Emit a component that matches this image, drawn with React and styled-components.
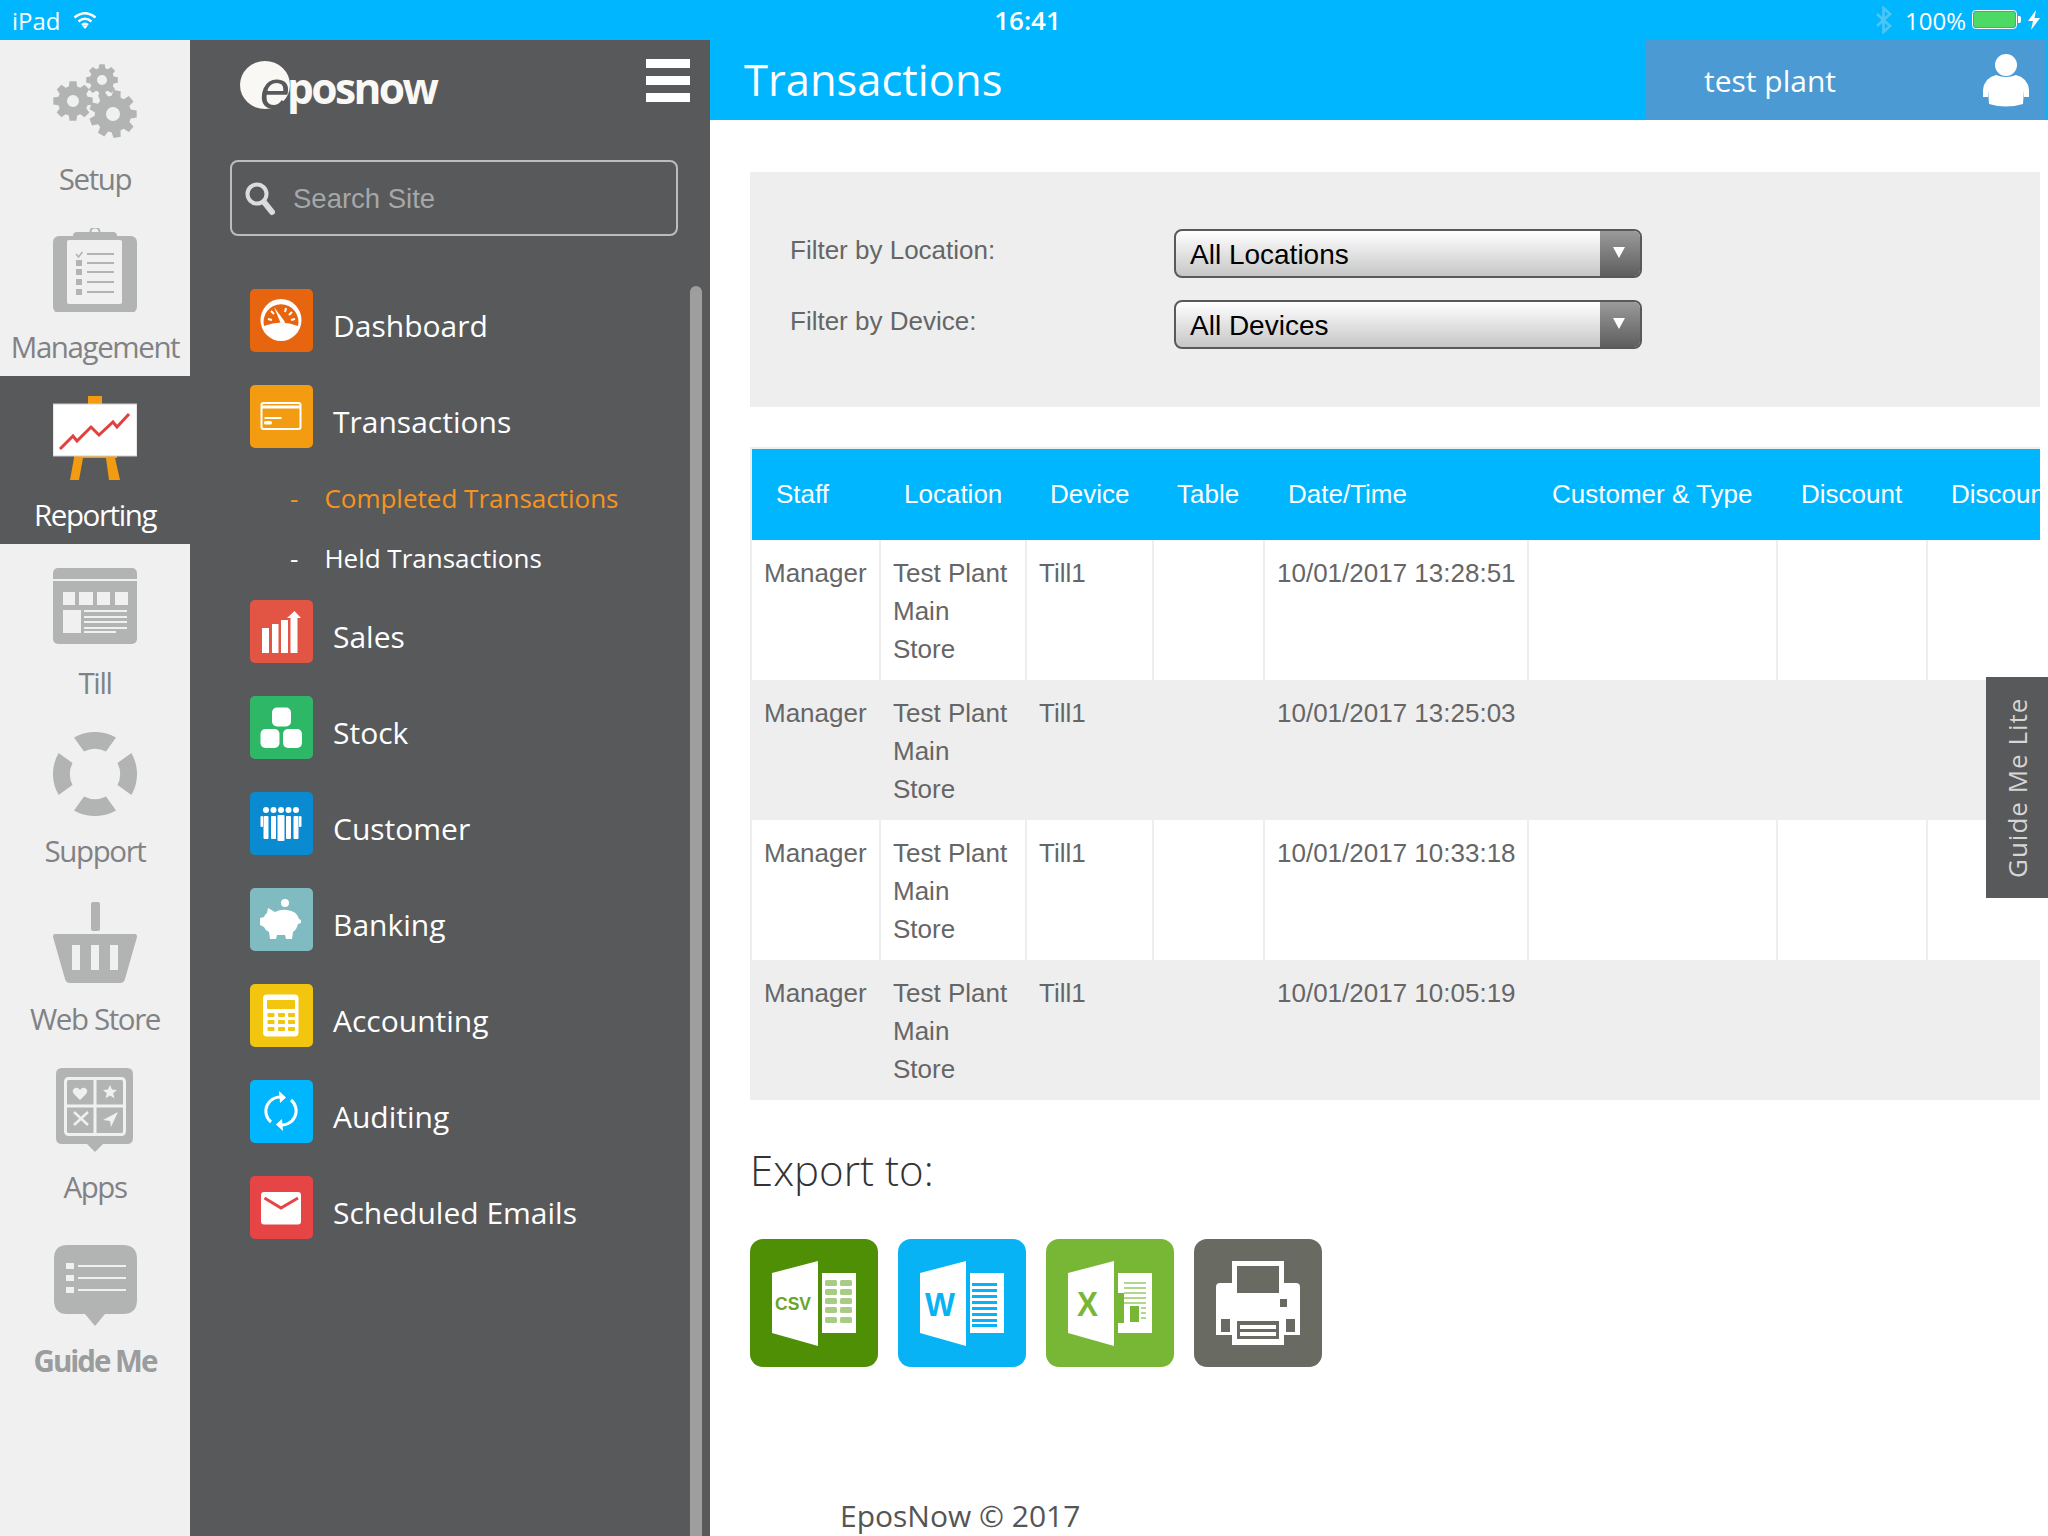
import React from 'react';
import styled, { createGlobalStyle } from 'styled-components';

const GlobalStyle = createGlobalStyle`
  html, body { margin: 0; padding: 0; background: #fff; }
  body { font-family: 'Open Sans', sans-serif; }
`;

const Page = styled.div`
  position: relative;
  width: 2048px;
  height: 1536px;
  overflow: hidden;
  display: flex;
  flex-direction: column;
`;

// ios status bar
const StatusBar = styled.div`
  height: 40px;
  flex: none;
  background: #00b6ff;
  color: #fff;
  font-size: 24px;
  display: grid;
  grid-template-columns: 1fr auto 1fr;
  align-items: center;
  padding: 0 8px 0 12px;
`;

const StatusSide = styled.div`
  display: flex;
  align-items: center;
  gap: ${p => p.$gap || 0}px;
  justify-content: ${p => (p.$right ? 'flex-end' : 'flex-start')};
`;

const BatteryText = styled.span`
  margin-left: 6px;
`;

const Clock = styled.div`
  font-weight: 600;
  font-size: 26px;
  margin-left: 3px;
`;

const Body = styled.div`
  flex: 1;
  display: flex;
  min-height: 0;
`;

// left icon rail
const Rail = styled.nav`
  width: 190px;
  flex: none;
  background: #f0f0f0;
`;

const RailItem = styled.div`
  height: 168px;
  box-sizing: border-box;
  padding-top: 20px;
  display: flex;
  flex-direction: column;
  align-items: center;
  background: ${p => (p.$active ? '#58595b' : 'transparent')};
  color: ${p => (p.$active ? '#fff' : '#808285')};
`;

const RailIcon = styled.svg`
  width: 84px;
  height: ${p => p.$tall ? 92 : 84}px;
  flex: none;
  display: block;
  fill: #b2b4b4;
`;

const RailLabel = styled.div`
  font-size: 29.5px;
  font-weight: ${p => (p.$bold ? 700 : 400)};
  letter-spacing: ${p => (p.$bold ? -2 : -1.4)}px;
  line-height: 40px;
  margin-top: ${p => (p.$bold ? 13 : 15)}px;
  white-space: nowrap;
  color: ${p => (p.$bold ? '#9a9c9d' : 'inherit')};
`;

// dark menu column
const Sidebar = styled.aside`
  position: relative;
  width: 520px;
  flex: none;
  background: #58595b;
  color: #fff;
  box-sizing: border-box;
  padding-top: 20px;
`;

const LogoRow = styled.div`
  height: 52px;
  display: flex;
  align-items: center;
  justify-content: space-between;
  padding: 0 20px 0 50px;
`;

const Logo = styled.div`
  display: flex;
  align-items: center;
  color: #faf8f4;
`;

const LogoMark = styled.div`
  width: 50px;
  height: 48px;
  box-sizing: border-box;
  border-radius: 50%;
  background: #faf8f4;
  color: #58595b;
  display: flex;
  justify-content: flex-end;
  font: italic 400 54px/48px 'Liberation Sans', sans-serif;
  padding-top: 4px;
  margin-top: -2px;
`;

const LogoWord = styled.div`
  font-size: 42.5px;
  font-weight: 700;
  letter-spacing: -2.6px;
  line-height: 48px;
  margin: 3px 0 0 -3px;
`;

const Burger = styled.div`
  width: 44px;
  display: flex;
  flex-direction: column;
  gap: 8px;
  margin-bottom: 11px;
`;

const BurgerBar = styled.div`
  height: 9px;
  background: #fff;
`;

const SearchBox = styled.div`
  margin: 48px 32px 0 40px;
  height: 76px;
  box-sizing: border-box;
  border: 2px solid #bcbdbe;
  border-radius: 8px;
  display: flex;
  align-items: center;
  padding: 2px 0 0 13px;
  gap: 18px;
  font: 27.5px 'Liberation Sans', sans-serif;
  color: #a6a7a8;
`;

const NavList = styled.div`
  margin-top: 53px;
  padding-left: 60px;
  display: flex;
  flex-direction: column;
  gap: 33px;
`;

const NavRow = styled.div`
  display: flex;
  align-items: center;
  gap: 20px;
  height: 63px;
`;

const NavIcon = styled.div`
  width: 63px;
  height: 63px;
  border-radius: 5px;
  background: ${p => p.$bg};
  flex: none;
  svg { display: block; width: 63px; height: 63px; fill: #fff; }
`;

const NavLabel = styled.div`
  font-size: 30px;
  padding-top: 9px;
`;

const SubList = styled.div`
  margin: -12px 0 -22px;
  padding-left: 40px;
`;

const SubItem = styled.div`
  height: 60px;
  display: flex;
  align-items: center;
  gap: 26px;
  font-size: 26px;
  padding-bottom: 2px;
  box-sizing: border-box;
  color: ${p => (p.$active ? '#f7941d' : '#fff')};
`;

const ScrollThumb = styled.div`
  position: absolute;
  left: 500px;
  top: 246px;
  bottom: 0;
  width: 12px;
  border-radius: 6px 6px 0 0;
  background: #9e9e9e;
`;

// main column
const Main = styled.main`
  flex: 1;
  min-width: 0;
  background: #fff;
`;

const Header = styled.header`
  height: 80px;
  background: #00b6ff;
  color: #fff;
  display: flex;
  justify-content: space-between;
  padding: 0 2px 0 34px;
`;

const Title = styled.h1`
  margin: 0;
  font-size: 43.5px;
  font-weight: 400;
  line-height: 79px;
`;

const UserBlock = styled.div`
  width: 400px;
  background: #4b9ad4;
  display: flex;
  align-items: center;
  justify-content: space-between;
  box-sizing: border-box;
  padding: 0 17px 0 58px;
  font-size: 30px;
`;

const Content = styled.div`
  padding: 52px 8px 0 40px;
`;

const FilterPanel = styled.section`
  height: 235px;
  box-sizing: border-box;
  background: #eee;
  padding: 57px 0 0 40px;
  display: grid;
  grid-template-columns: 384px 468px;
  grid-auto-rows: 49px;
  row-gap: 22px;
  align-items: start;
`;

const FilterLabel = styled.div`
  font: 26px/36px 'Liberation Sans', sans-serif;
  color: #666;
  margin-top: 3px;
`;

const Select = styled.div`
  height: 49px;
  box-sizing: border-box;
  border: 2px solid #58595b;
  border-radius: 8px;
  overflow: hidden;
  display: flex;
  justify-content: space-between;
  background: linear-gradient(#fff, #c6c6c6);
  font: 28px/47px 'Liberation Sans', sans-serif;
  color: #000;
  padding-left: 14px;
`;

const SelectArrow = styled.div`
  width: 40px;
  background: linear-gradient(#9a9a9a, #5e5e5e);
  display: flex;
  align-items: center;
  justify-content: center;
  &::after {
    content: '';
    border-left: 6px solid transparent;
    border-right: 6px solid transparent;
    border-top: 11px solid #fff;
    margin: -3px 2px 0 0;
  }
`;

const TableWrap = styled.div`
  margin-top: 40px;
  overflow: hidden;
`;

const Table = styled.table`
  border-collapse: collapse;
  table-layout: fixed;
  width: 1326px;
  font-family: 'Liberation Sans', sans-serif;
  font-size: 26px;
  color: #666;
  border-top: 2px solid #eee;
  border-left: 2px solid #eee;
`;

const Th = styled.th`
  height: 92px;
  padding: 0 0 0 24px;
  background: #00b6ff;
  color: #fff;
  font-weight: 400;
  text-align: left;
  white-space: nowrap;
  box-sizing: border-box;
`;

const Tr = styled.tr`
  background: ${p => (p.$shaded ? '#eee' : '#fff')};
`;

const Td = styled.td`
  height: 140px;
  box-sizing: border-box;
  padding: 14px 12px 12px;
  vertical-align: top;
  line-height: 38px;
  border-right: 2px solid #eee;
`;

const WhenCell = styled(Td)`
  white-space: nowrap;
`;

const ExportTitle = styled.h2`
  margin: 44px 0 0;
  font-size: 42px;
  font-weight: 300;
  line-height: 52px;
  color: #333;
`;

const ExportRow = styled.div`
  display: flex;
  gap: 20px;
  margin-top: 43px;
`;

const ExportTile = styled.div`
  width: 128px;
  height: 128px;
  border-radius: 13px;
  background: ${p => p.$bg};
  svg { display: block; width: 128px; height: 128px; fill: #fff; }
`;

const Footer = styled.footer`
  margin: 129px 0 0 90px;
  font-size: 30px;
  line-height: 40px;
  color: #555;
`;

const GuideTab = styled.div`
  position: absolute;
  right: 0;
  top: 677px;
  width: 62px;
  height: 221px;
  background: #58595b;
  color: #d5d5d5;
  font-size: 26px;
  letter-spacing: 1px;
  writing-mode: vertical-rl;
  transform: rotate(180deg);
  display: flex;
  align-items: center;
  justify-content: center;
`;

// drawn glyphs
const gearPath = (cx, cy, r, teeth, hole) => {
  const pts = [];
  const step = (Math.PI * 2) / teeth;
  for (let i = 0; i < teeth; i++) {
    const a = i * step;
    [[-0.3, 0.76], [-0.18, 1], [0.18, 1], [0.3, 0.76]].forEach(([o, k]) => {
      const t = a + o * step * 1.2;
      pts.push(`${(cx + Math.cos(t) * r * k).toFixed(1)} ${(cy + Math.sin(t) * r * k).toFixed(1)}`);
    });
  }
  return `M${pts.join('L')}Z M${cx - hole} ${cy}a${hole} ${hole} 0 1 0 ${hole * 2} 0a${hole} ${hole} 0 1 0 ${-hole * 2} 0Z`;
};

const polar = (r, deg) => {
  const a = ((deg - 90) * Math.PI) / 180;
  return `${(42 + Math.cos(a) * r).toFixed(1)} ${(42 + Math.sin(a) * r).toFixed(1)}`;
};

const buoyPart = at =>
  `M${polar(42, at - 30)}A42 42 0 0 1 ${polar(42, at + 30)}L${polar(25, at + 26)}A25 25 0 0 0 ${polar(25, at - 26)}Z`;

const SetupIcon = () => (
  <RailIcon viewBox="0 0 84 84">
    <path fillRule="evenodd" d={gearPath(60, 54, 24, 9, 7)} />
    <path fillRule="evenodd" d={gearPath(20, 41, 20, 8, 6)} />
    <path fillRule="evenodd" d={gearPath(49, 20, 16, 8, 5)} />
  </RailIcon>
);

const ManagementIcon = () => (
  <RailIcon viewBox="0 0 84 84">
    <rect x="0" y="8" width="84" height="77" rx="6" />
    <rect x="20" y="4" width="44" height="11" rx="4" />
    <circle cx="42" cy="4" r="4.5" fill="none" stroke="#b2b4b4" strokeWidth="2" />
    <rect x="14" y="12" width="55" height="64" rx="2" fill="#f0f0f0" />
    {[35, 44, 54, 64].map(y => <rect key={y} x="23" y={y - 3} width="6" height="6" />)}
    <path d="M23 26l2.5 3 4-5" fill="none" stroke="#b2b4b4" strokeWidth="1.6" />
    {[26, 35, 44, 54, 64].map(y => <rect key={y} x="34" y={y - 1} width="27" height="2" />)}
  </RailIcon>
);

const ReportingIcon = () => (
  <RailIcon viewBox="0 0 84 84">
    <rect x="35" y="0" width="14" height="10" fill="#f39c12" />
    <rect x="21" y="58" width="43" height="4" fill="#f39c12" />
    <path d="M21 62h9l-4 22H17zM53 62h9l5 22H56z" fill="#f39c12" />
    <rect x="0" y="8" width="84" height="52" fill="#fff" stroke="#d0d0d0" />
    <path d="M7 53L20 40L24 45L38 31L46 39L60 26L64 31L76 18" fill="none" stroke="#e2403f" strokeWidth="3" />
  </RailIcon>
);

const TillIcon = () => (
  <RailIcon viewBox="0 0 84 84">
    <rect x="0" y="4" width="84" height="76" rx="5" />
    <rect x="0" y="15" width="84" height="2" fill="#f0f0f0" />
    {[[10, 12], [26, 14], [44, 13], [62, 13]].map(([x, w]) => (
      <rect key={x} x={x} y="28" width={w} height="13" fill="#f0f0f0" />
    ))}
    <rect x="10" y="46" width="18" height="23" fill="#f0f0f0" />
    {[46, 52, 57, 63, 67].map((y, i) => (
      <rect key={y} x="31" y={y} width={i === 4 ? 32 : 43} height="2" fill="#f0f0f0" />
    ))}
  </RailIcon>
);

const SupportIcon = () => (
  <RailIcon viewBox="0 0 84 84">
    {[0, 90, 180, 270].map(a => <path key={a} d={buoyPart(a)} />)}
  </RailIcon>
);

const StoreIcon = () => (
  <RailIcon viewBox="0 0 84 84">
    <rect x="38" y="2" width="9" height="29" rx="2" />
    <path fillRule="evenodd" d="M2 34H82Q84 34 84 37L72 79Q71 83 67 83H17Q13 83 12 79L0 37Q0 34 2 34ZM19 45V70H27V45ZM38 45V70H46V45ZM57 45V70H65V45Z" />
  </RailIcon>
);

const AppsIcon = () => (
  <RailIcon viewBox="0 0 84 84">
    <path d="M9 0H74Q80 0 80 6V70Q80 76 74 76H50L42 84L34 76H9Q3 76 3 70V6Q3 0 9 0Z" />
    <rect x="12.5" y="10.5" width="59" height="56" rx="3" fill="none" stroke="#f0f0f0" strokeWidth="3" />
    <rect x="40.5" y="10" width="3" height="56" fill="#f0f0f0" />
    <rect x="12" y="36.500" width="60" height="3" fill="#f0f0f0" />
    <path d="M27 32l-6-6q-3-4 1-6 3-1 5 2 2-3 5-2 4 2 1 6z" fill="#f0f0f0" />
    <path d="M57 17l2 4.500 5 .5-3.800 3.300 1.200 5-4.400-2.700-4.400 2.700 1.200-5L50 22l5-.5z" fill="#f0f0f0" />
    <path d="M21 44l14 13M35 44L21 57" stroke="#f0f0f0" strokeWidth="2.400" />
    <path d="M65 44L50 52l7 1 1 6z" fill="#f0f0f0" />
  </RailIcon>
);

const GuideIcon = () => (
  <RailIcon viewBox="0 0 84 92" $tall>
    <path d="M14 9H70Q84 9 84 23V64Q84 78 70 78H52L42 90L32 78H14Q1 78 1 64V23Q1 9 14 9Z" />
    {[30, 42, 54].map(y => (
      <g key={y}>
        <rect x="13" y={y - 3} width="8" height="6" fill="#f0f0f0" />
        <rect x="25" y={y - 1} width="48" height="2" fill="#f0f0f0" />
      </g>
    ))}
  </RailIcon>
);

const DashboardGlyph = () => (
  <svg viewBox="0 0 63 63">
    <ellipse cx="31" cy="31" rx="20.500" ry="21" />
    <path d="M14 37A17.500 17.500 0 1 1 48 37Q31 30 14 37Z" fill="#e8650f" />
    <path d="M24 18l7 17a3 3 0 0 0 4-2z" fill="#fff" />
    <path d="M18 30l4 1M21 22l3 3M36 19l-1 4M42 23l-3 3M45 30l-4 1" stroke="#fff" strokeWidth="2" />
  </svg>
);

const CardGlyph = () => (
  <svg viewBox="0 0 63 63">
    <rect x="11.500" y="18" width="39" height="26" rx="2" fill="none" stroke="#fff" strokeWidth="2" />
    <rect x="11" y="20.500" width="40" height="3" />
    <rect x="14.500" y="32" width="17" height="2" />
    <rect x="14" y="36" width="8" height="3.500" rx="1.500" />
  </svg>
);

const SalesGlyph = () => (
  <svg viewBox="0 0 63 63">
    <rect x="12" y="28" width="7" height="25" />
    <rect x="22" y="24" width="6.500" height="29" />
    <rect x="31" y="20" width="7" height="33" />
    <path d="M40.500 53V18H37L44.500 11L51 18H47.500V53Z" />
  </svg>
);

const StockGlyph = () => (
  <svg viewBox="0 0 63 63">
    <rect x="22" y="11.500" width="19" height="19" rx="5" />
    <rect x="10.500" y="33" width="19" height="19" rx="5" />
    <rect x="33" y="33" width="19" height="19" rx="5" />
  </svg>
);

const CustomerGlyph = () => (
  <svg viewBox="0 0 63 63">
    {[16, 23.500, 38.500, 46].map(cx => (
      <g key={cx}>
        <circle cx={cx} cy="18" r="3" />
        <rect x={cx - 2.500} y="24" width="5" height="23" rx="1" />
      </g>
    ))}
    <circle cx="31" cy="18" r="3" />
    <rect x="27.500" y="23" width="7" height="26" rx="1" />
    <rect x="10.500" y="24" width="2.500" height="11" rx="1" />
    <rect x="49" y="24" width="2.500" height="11" rx="1" />
  </svg>
);

const PigGlyph = () => (
  <svg viewBox="0 0 63 63">
    <circle cx="35" cy="15" r="4" />
    <path d="M18 20l7 4q6-3 12-2 10 1 12 9l2 1v3l-3 1q-1 5-5 8l-1 7h-6l-1-4h-8l-1 4h-6l-1-7q-4-2-5-5l-4-2v-7l4-1q1-3 3-4z" />
  </svg>
);

const CalcGlyph = () => (
  <svg viewBox="0 0 63 63">
    <rect x="13" y="10.500" width="35.500" height="42" rx="4" />
    <rect x="17" y="16" width="28" height="9" rx="1" fill="#f2c50f" />
    {[29, 36, 43].map(y => [17.500, 28, 38].map(x => (
      <rect key={`${x}-${y}`} x={x} y={y} width="7" height="4" rx="1" fill="#f2c50f" />
    )))}
  </svg>
);

const AuditGlyph = () => (
  <svg viewBox="0 0 63 63">
    <path d="M21 42A14 14 0 0 1 33 17.500" fill="none" stroke="#fff" strokeWidth="3" />
    <path d="M41 20A14 14 0 0 1 29 44.500" fill="none" stroke="#fff" strokeWidth="3" />
    <path d="M29 11l7 6.500-6 5.500zM33 51l-7-6.500 6-5.500z" />
  </svg>
);

const MailGlyph = () => (
  <svg viewBox="0 0 63 63">
    <rect x="11" y="16" width="40" height="32.500" rx="3" />
    <path d="M14.500 22L31 32L48 22" fill="none" stroke="#e74445" strokeWidth="3" />
  </svg>
);

const CsvTile = () => (
  <ExportTile $bg="#4e8f06">
    <svg viewBox="0 0 128 128">
      <path d="M22 34L68 22V107L22 94Z" />
      <rect x="72" y="34" width="34" height="60" />
      <text x="25" y="71" fontFamily="Liberation Sans" fontWeight="700" fontSize="19" fill="#6aa52a" textLength="36" lengthAdjust="spacingAndGlyphs">CSV</text>
      {[41, 50, 59, 68, 78].map(y => [75, 90].map(x => (
        <rect key={`${x}-${y}`} x={x} y={y} width="12" height="6" rx="1.500" fill="#a8cc84" />
      )))}
    </svg>
  </ExportTile>
);

const WordTile = () => (
  <ExportTile $bg="#07b3f5">
    <svg viewBox="0 0 128 128">
      <path d="M22 34L68 22V107L22 94Z" />
      <rect x="72" y="34" width="34" height="60" />
      <text x="27" y="77" fontFamily="Liberation Sans" fontWeight="700" fontSize="34" fill="#07b3f5" textLength="30" lengthAdjust="spacingAndGlyphs">W</text>
      {[44, 50, 56, 62, 68, 74, 80, 85].map(y => (
        <rect key={y} x="74" y={y} width="25" height="3" fill="#07b3f5" />
      ))}
    </svg>
  </ExportTile>
);

const ExcelTile = () => (
  <ExportTile $bg="#78b735">
    <svg viewBox="0 0 128 128">
      <path d="M22 34L68 22V107L22 94Z" />
      <rect x="72" y="34" width="34" height="60" />
      <text x="31" y="77" fontFamily="Liberation Sans" fontWeight="700" fontSize="35" fill="#78b735" textLength="21" lengthAdjust="spacingAndGlyphs">X</text>
      {[43, 48, 53, 58, 63].map(y => <rect key={y} x="78" y={y} width="22" height="2" fill="#b3d68e" />)}
      <path d="M72 54H78V84H72Z" fill="#78b735" />
      <rect x="84" y="67" width="9" height="16" fill="#78b735" />
      {[68, 73, 78].map(y => <rect key={y} x="95" y={y} width="5" height="2" fill="#b3d68e" />)}
    </svg>
  </ExportTile>
);

const PrintTile = () => (
  <ExportTile $bg="#696a62">
    <svg viewBox="0 0 128 128">
      <path fillRule="evenodd" d="M38 22H90V44H102Q106 44 106 48V96H90V106H38V96H22V48Q22 44 26 44H38ZM43 27V54H85V27ZM86 60V68H93V60ZM27 80V93H36V80ZM92 80V93H101V80ZM43 82V100H85V82Z" />
      <rect x="46" y="86" width="36" height="4" />
      <rect x="46" y="93" width="36" height="4" />
    </svg>
  </ExportTile>
);

const Wifi = () => (
  <svg width="24" height="18" viewBox="0 0 24 18" fill="none" stroke="#fff" strokeWidth="2.600">
    <path d="M1.500 6.500Q12-2 22.500 6.500M5.500 10.500Q12 5 18.500 10.500M9 14Q12 11.500 15 14" />
    <path d="M12 18l-2.500-3q2.500-1.500 5 0z" fill="#fff" stroke="none" />
  </svg>
);

const Bluetooth = () => (
  <svg width="18" height="28" viewBox="0 0 18 28" fill="none" stroke="#4dc5f5" strokeWidth="2.600">
    <path d="M2 8L15 20L8.500 26V2L15 8L2 20" />
  </svg>
);

const Battery = () => (
  <svg width="50" height="20" viewBox="0 0 50 20">
    <rect x="0.500" y="0.500" width="44" height="18" rx="3" fill="none" stroke="#fff" />
    <rect x="2" y="2" width="41" height="15" rx="2" fill="#4cd964" />
    <path d="M46 6h1.500q1.500 0 1.500 2v3q0 2-1.500 2H46z" fill="#fff" />
  </svg>
);

const Bolt = () => (
  <svg width="12" height="20" viewBox="0 0 12 20" fill="#fff">
    <path d="M8 0L0 11H5L3 20L12 8H6.500Z" />
  </svg>
);

const UserGlyph = () => (
  <svg width="46" height="53" viewBox="0 0 46 53" fill="#fff">
    <circle cx="23" cy="11" r="11" />
    <path d="M13 21q10 4 20 0 12 3 13 15v7h-5v-7l-1 14q-17 5-34 0L5 36v7H0v-7Q1 24 13 21z" />
  </svg>
);

const SearchGlyph = () => (
  <svg width="30" height="34" viewBox="0 0 30 34" fill="none" stroke="#dcdcdc">
    <circle cx="12" cy="12" r="9.500" strokeWidth="4" />
    <path d="M19 20L27 30" strokeWidth="6" strokeLinecap="round" />
  </svg>
);

const railItems = [
  { label: 'Setup', icon: <SetupIcon /> },
  { label: 'Management', icon: <ManagementIcon /> },
  { label: 'Reporting', icon: <ReportingIcon />, active: true },
  { label: 'Till', icon: <TillIcon /> },
  { label: 'Support', icon: <SupportIcon /> },
  { label: 'Web Store', icon: <StoreIcon /> },
  { label: 'Apps', icon: <AppsIcon /> },
  { label: 'Guide Me', icon: <GuideIcon />, bold: true },
];

const navItems = [
  { label: 'Dashboard', bg: '#e8650f', icon: <DashboardGlyph /> },
  { label: 'Transactions', bg: '#f39c12', icon: <CardGlyph />, open: true },
  { label: 'Sales', bg: '#e25544', icon: <SalesGlyph /> },
  { label: 'Stock', bg: '#2fb768', icon: <StockGlyph /> },
  { label: 'Customer', bg: '#0a8ad0', icon: <CustomerGlyph /> },
  { label: 'Banking', bg: '#7fbbc0', icon: <PigGlyph /> },
  { label: 'Accounting', bg: '#f2c50f', icon: <CalcGlyph /> },
  { label: 'Auditing', bg: '#00b6ff', icon: <AuditGlyph /> },
  { label: 'Scheduled Emails', bg: '#e74445', icon: <MailGlyph /> },
];

const columns = [
  ['Staff', 129], ['Location', 146], ['Device', 127], ['Table', 111],
  ['Date/Time', 264], ['Customer & Type', 249], ['Discount', 150], ['Discount', 150],
];

const rows = [
  '10/01/2017 13:28:51',
  '10/01/2017 13:25:03',
  '10/01/2017 10:33:18',
  '10/01/2017 10:05:19',
];

function App() {
  return (
    <Page>
      <GlobalStyle />
      <StatusBar>
        <StatusSide $gap={12}>iPad <Wifi /></StatusSide>
        <Clock>16:41</Clock>
        <StatusSide $right $gap={6}>
          <Bluetooth />
          <BatteryText>100%</BatteryText>
          <Battery />
          <Bolt />
        </StatusSide>
      </StatusBar>
      <Body>
        <Rail>
          {railItems.map(item => (
            <RailItem key={item.label} $active={item.active}>
              {item.icon}
              <RailLabel $bold={item.bold}>{item.label}</RailLabel>
            </RailItem>
          ))}
        </Rail>
        <Sidebar>
          <LogoRow>
            <Logo>
              <LogoMark>e</LogoMark>
              <LogoWord>posnow</LogoWord>
            </Logo>
            <Burger>
              <BurgerBar />
              <BurgerBar />
              <BurgerBar />
            </Burger>
          </LogoRow>
          <SearchBox>
            <SearchGlyph />
            Search Site
          </SearchBox>
          <NavList>
            {navItems.map(item => (
              <React.Fragment key={item.label}>
                <NavRow>
                  <NavIcon $bg={item.bg}>{item.icon}</NavIcon>
                  <NavLabel>{item.label}</NavLabel>
                </NavRow>
                {item.open && (
                  <SubList>
                    <SubItem $active><span>-</span>Completed Transactions</SubItem>
                    <SubItem><span>-</span>Held Transactions</SubItem>
                  </SubList>
                )}
              </React.Fragment>
            ))}
          </NavList>
          <ScrollThumb />
        </Sidebar>
        <Main>
          <Header>
            <Title>Transactions</Title>
            <UserBlock>
              test plant
              <UserGlyph />
            </UserBlock>
          </Header>
          <Content>
            <FilterPanel>
              <FilterLabel>Filter by Location:</FilterLabel>
              <Select>All Locations<SelectArrow /></Select>
              <FilterLabel>Filter by Device:</FilterLabel>
              <Select>All Devices<SelectArrow /></Select>
            </FilterPanel>
            <TableWrap>
              <Table>
                <colgroup>
                  {columns.map(([name, w], i) => <col key={i} style={{ width: w }} />)}
                </colgroup>
                <thead>
                  <tr>
                    {columns.map(([name], i) => <Th key={i}>{name}</Th>)}
                  </tr>
                </thead>
                <tbody>
                  {rows.map((when, i) => (
                    <Tr key={when} $shaded={i % 2 === 1}>
                      <Td>Manager</Td>
                      <Td>Test Plant Main Store</Td>
                      <Td>Till1</Td>
                      <Td />
                      <WhenCell>{when}</WhenCell>
                      <Td />
                      <Td />
                      <Td />
                    </Tr>
                  ))}
                </tbody>
              </Table>
            </TableWrap>
            <ExportTitle>Export to:</ExportTitle>
            <ExportRow>
              <CsvTile />
              <WordTile />
              <ExcelTile />
              <PrintTile />
            </ExportRow>
            <Footer>EposNow © 2017</Footer>
          </Content>
        </Main>
      </Body>
      <GuideTab>Guide Me Lite</GuideTab>
    </Page>
  );
}

export default App;
